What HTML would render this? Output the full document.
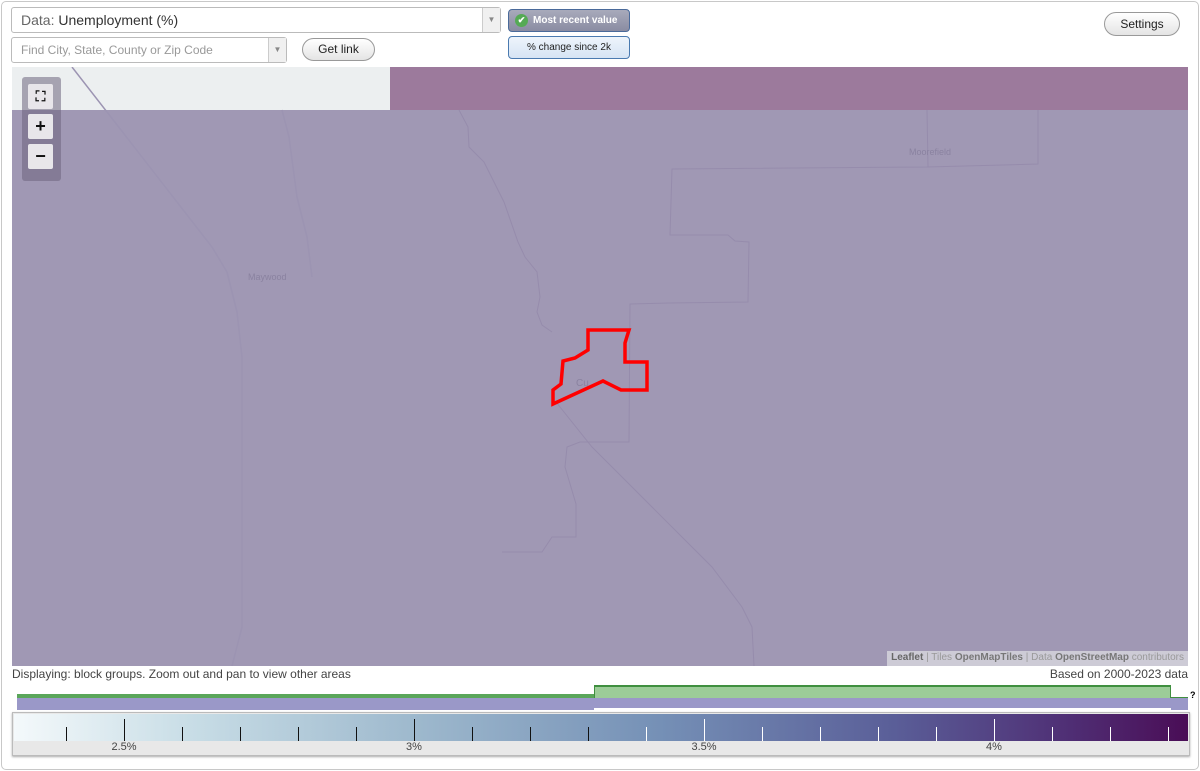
<!DOCTYPE html>
<html><head><meta charset="utf-8"><style>
*{box-sizing:border-box;margin:0;padding:0}
body{width:1200px;height:771px;background:#fff;font-family:"Liberation Sans",Arial,sans-serif;position:relative;overflow:hidden}
.frame{position:absolute;left:1px;top:1px;width:1198px;height:769px;border:1px solid #c8c8c8;border-radius:5px}
.sel{position:absolute;border:1px solid #bbb;border-radius:3px;background:#fff;color:#333}
.arrow{position:absolute;right:0;top:0;bottom:0;width:18px;border-left:1px solid #ccc;background:#f0f0f0;color:#888;font-size:8px;text-align:center}
.btn{position:absolute;border:1px solid #999;border-radius:12px;background:linear-gradient(#fff,#e4e4e4);font-size:12px;text-align:center;color:#222}
.map{position:absolute;left:12px;top:67px;width:1176px;height:599px;background:#a098b4;overflow:hidden}
.ctrl{position:absolute;left:22px;top:77px;width:39px;height:104px;background:rgba(110,100,125,.55);border-radius:3px}
.cb{position:absolute;left:6px;width:25px;height:25px;background:#e8e6ea;border-radius:2px;text-align:center;font-weight:bold;font-size:18px;line-height:25px;color:#111}
.tick{position:absolute;width:1px;background:#111}
.lbl{position:absolute;top:741px;font-size:11px;color:#444;width:40px;margin-left:-20px;text-align:center}
</style></head><body>
<div class="frame"></div>
<div class="sel" style="left:11px;top:7px;width:490px;height:26px;font-size:14px;line-height:24px;padding-left:9px"><span style="color:#666">Data:</span> Unemployment (%)<div class="arrow" style="line-height:24px">▼</div></div>
<div class="sel" style="left:11px;top:37px;width:276px;height:26px;font-size:12px;line-height:24px;padding-left:9px;color:#999">Find City, State, County or Zip Code<div class="arrow" style="line-height:24px">▼</div></div>
<div class="btn" style="left:302px;top:38px;width:73px;height:23px;line-height:21px">Get link</div>
<div style="position:absolute;left:508px;top:9px;width:122px;height:23px;border:1px solid #4a6a9a;border-radius:4px;background:linear-gradient(#a8aabb,#8a8ca2);color:#fff;font-size:10px;font-weight:bold;line-height:21px;padding-left:24px">Most recent value<span style="position:absolute;left:6px;top:4px;width:13px;height:13px;border-radius:50%;background:#5a5;color:#fff;font-size:9px;line-height:13px;text-align:center">✔</span></div>
<div style="position:absolute;left:508px;top:36px;width:122px;height:23px;border:1px solid #4a7ab0;border-radius:4px;background:linear-gradient(#eef4fb,#d6e4f4);color:#222;font-size:10px;line-height:21px;text-align:center">% change since 2k</div>
<div class="btn" style="left:1104px;top:12px;width:76px;height:24px;line-height:22px">Settings</div>

<div class="map">
<div style="position:absolute;left:0;top:0;width:378px;height:43px;background:#eceff0"></div>
<div style="position:absolute;left:378px;top:0;width:798px;height:43px;background:#9c7a9c"></div>
<svg width="1176" height="599" style="position:absolute;left:0;top:0" fill="none">
<g stroke="#968cac" stroke-width="1">
<path d="M447 43 L456 60 L457 80 L472 95 L492 135 L506 175 L513 190 L525 205 L528 230 L525 245 L530 258 L540 265"/>
<path d="M915 43 L916 100 L660 102 L658 168 L716 168 L723 174 L737 175 L736 235 L657 236 L618 237 L617 375 L568 375 L555 380 L553 400 L564 437 L564 470 L540 470 L530 485 L490 485"/>
<path d="M1026 43 L1026 97 L915 100"/>
<path d="M540 330 L580 380 L640 440 L700 500 L730 540 L740 560 L742 599"/>
</g>
<g stroke="#9c94b2" stroke-width="1.5">
<path d="M60 0 L200 180 L215 205 L225 245 L230 290 L230 560 L220 599"/>
<path d="M270 43 L277 70 L285 130 L295 170 L300 210"/>
</g>
<text x="236" y="213" font-size="9" fill="#8a82a0" font-family="Liberation Sans">Maywood</text>
<text x="897" y="88" font-size="9" fill="#8a82a0" font-family="Liberation Sans">Moorefield</text>
<text x="564" y="319" font-size="10" fill="#8a82a0" font-family="Liberation Sans">Cu</text>
<path d="M576 263 L617 263 L613 276 L613 295 L635 295 L635 323 L609 323 L591 314 L541 337 L541 323 L549 317 L551 294 L563 291 L576 283 Z" stroke="#f00" stroke-width="3.5"/>
</svg>
<div style="position:absolute;right:0;bottom:0;background:rgba(220,220,225,.75);font-size:10px;color:#999;padding:1px 4px;height:15px"><b style="color:#666">Leaflet</b> | Tiles <b style="color:#777">OpenMapTiles</b> | Data <b style="color:#777">OpenStreetMap</b> contributors</div>
</div>
<div class="ctrl"><div class="cb" style="top:7px;font-size:14px">⛶</div><div class="cb" style="top:37px">+</div><div class="cb" style="top:67px">−</div></div>

<div style="position:absolute;left:12px;top:667px;font-size:12px;color:#444">Displaying: block groups. Zoom out and pan to view other areas</div>
<div style="position:absolute;right:12px;top:667px;font-size:12px;color:#444">Based on 2000-2023 data</div>

<div style="position:absolute;left:17px;top:694px;width:577px;height:4px;background:#5aa65a"></div>
<div style="position:absolute;left:594px;top:685px;width:577px;height:13px;background:#9ccc98;border-top:2px solid #3f8f3f;border-left:1px solid #3f8f3f;border-right:1px solid #3f8f3f"></div>
<div style="position:absolute;left:1171px;top:697px;width:17px;height:2px;background:#3f8f3f"></div>
<div style="position:absolute;left:1190px;top:690px;font-size:9px;font-weight:bold">?</div>
<div style="position:absolute;left:17px;top:698px;width:1171px;height:12px;background:#9a98c8"></div>
<div style="position:absolute;left:594px;top:708px;width:577px;height:2px;background:#fff"></div>

<div style="position:absolute;left:12px;top:712px;width:1178px;height:44px;border:1px solid #bbb;background:#e8e8e8;box-shadow:0 1px 2px #aaa"></div>
<div style="position:absolute;left:14px;top:714px;width:1174px;height:27px;background:linear-gradient(90deg,#f4f9fb,#c8dde6 15%,#9cb7cc 35%,#7590b6 55%,#5a5e98 75%,#4f2e74 90%,#4a0d56)"></div>
<div class="tick" style="left:124px;top:719px;height:22px"></div>
<div class="tick" style="left:414px;top:719px;height:22px"></div>
<div class="tick" style="left:704px;top:719px;height:22px;background:#fff"></div>
<div class="tick" style="left:994px;top:719px;height:22px;background:#fff"></div>
<div class="tick" style="left:66px;top:727px;height:14px"></div>
<div class="tick" style="left:182px;top:727px;height:14px"></div>
<div class="tick" style="left:240px;top:727px;height:14px"></div>
<div class="tick" style="left:298px;top:727px;height:14px"></div>
<div class="tick" style="left:356px;top:727px;height:14px"></div>
<div class="tick" style="left:472px;top:727px;height:14px"></div>
<div class="tick" style="left:530px;top:727px;height:14px"></div>
<div class="tick" style="left:588px;top:727px;height:14px"></div>
<div class="tick" style="left:646px;top:727px;height:14px;background:#fff"></div>
<div class="tick" style="left:762px;top:727px;height:14px;background:#fff"></div>
<div class="tick" style="left:820px;top:727px;height:14px;background:#fff"></div>
<div class="tick" style="left:878px;top:727px;height:14px;background:#fff"></div>
<div class="tick" style="left:936px;top:727px;height:14px;background:#fff"></div>
<div class="tick" style="left:1052px;top:727px;height:14px;background:#fff"></div>
<div class="tick" style="left:1110px;top:727px;height:14px;background:#fff"></div>
<div class="tick" style="left:1168px;top:727px;height:14px;background:#fff"></div>
<div class="lbl" style="left:124px">2.5%</div>
<div class="lbl" style="left:414px">3%</div>
<div class="lbl" style="left:704px">3.5%</div>
<div class="lbl" style="left:994px">4%</div>
</body></html>
